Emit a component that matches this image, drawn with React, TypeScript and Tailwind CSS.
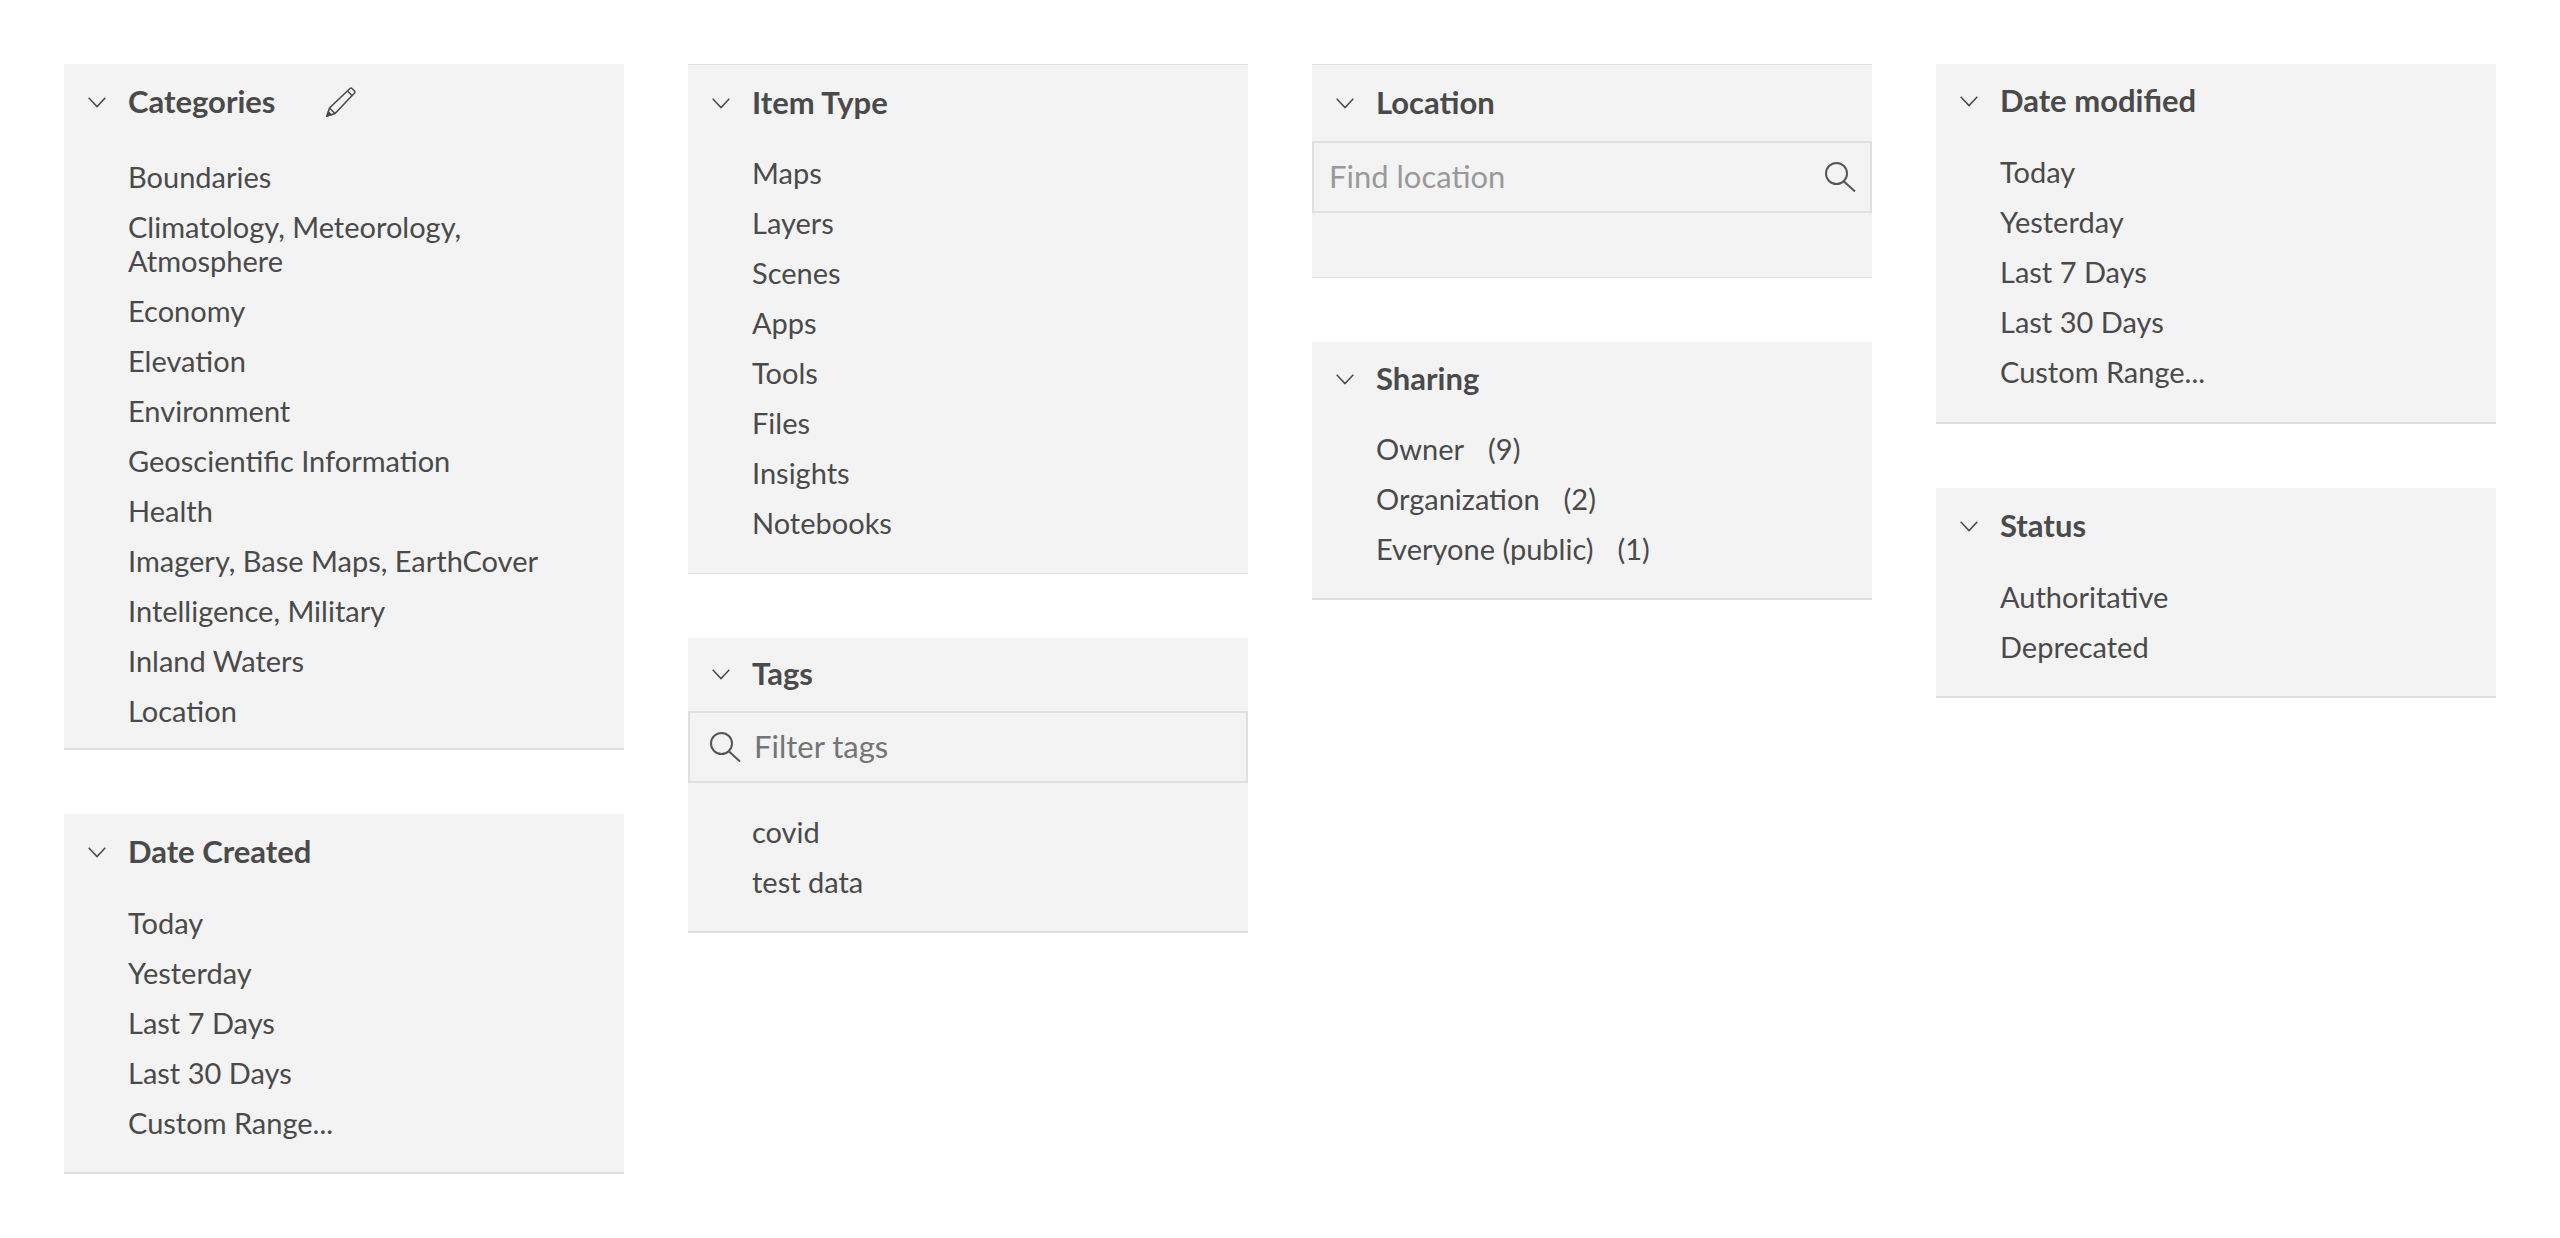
const dateRanges = ["Today", "Yesterday", "Last 7 Days", "Last 30 Days", "Custom Range..."]

function Chevron() {
  return (
    <svg width="18" height="11" viewBox="0 0 18 11" fill="none" stroke="#4a4a4a" strokeWidth="1.5" className="shrink-0">
      <path d="M0.7 0.8L9 9.6l8.3-8.8" />
    </svg>
  )
}

function SearchIcon() {
  return (
    <svg width="31" height="30" viewBox="0 0 31 30" fill="none" stroke="#555555" strokeWidth="2" className="shrink-0">
      <circle cx="11.5" cy="11.5" r="10.5" />
      <path d="M19 19.5L30 29.5" />
    </svg>
  )
}

function PencilIcon() {
  return (
    <svg width="30" height="30" viewBox="0 0 30 30" fill="none" stroke="#4a4a4a" strokeWidth="1.5" className="ml-[50px] shrink-0">
      <path d="M1 29l2.5-8L24 1.5q1-1 2 0L28.5 4q1 1 0 2L9 26.5z" />
      <path d="M3.5 21L9 26.5M21.5 4l5 5" />
      <path d="M1 29l1.3-4.2 2.9 2.9z" fill="#4a4a4a" />
    </svg>
  )
}

function Header({ title, children, height = "h-[76px]" }: { title: string; children?: React.ReactNode; height?: string }) {
  return (
    <div className={`flex items-center pl-[24px] ${height}`}>
      <Chevron />
      <h3 className="mb-[2px] ml-[22px] text-[31px] font-bold text-[#4a4a4a]">{title}</h3>
      {children}
    </div>
  )
}

function Item({ label, count }: { label: string; count?: number }) {
  return (
    <li className="flex min-h-[50px] items-center py-[8px] pl-[64px] pr-[64px] text-[29px] leading-[34px] text-[#4a4a4a]">
      <span>{label}</span>
      {count !== undefined && <span className="ml-[24px]">({count})</span>}
    </li>
  )
}

function Panel({ className = "", children }: { className?: string; children: React.ReactNode }) {
  return <section className={`border-[#e0e0e0] bg-[#f3f3f3] ${className}`}>{children}</section>
}

export default function App() {
  return (
    <div className="grid min-h-[1238px] grid-cols-4 items-start gap-[64px] bg-white p-[64px] font-['Lato',sans-serif]">
      <div className="flex flex-col gap-[64px]">
        <Panel className="border-b-2 pb-[12px]">
          <Header title="Categories">
            <PencilIcon />
          </Header>
          <ul className="pt-[12px]">
            {[
              "Boundaries",
              "Climatology, Meteorology, Atmosphere",
              "Economy",
              "Elevation",
              "Environment",
              "Geoscientific Information",
              "Health",
              "Imagery, Base Maps, EarthCover",
              "Intelligence, Military",
              "Inland Waters",
              "Location",
            ].map((c) => (
              <Item key={c} label={c} />
            ))}
          </ul>
        </Panel>
        <Panel className="border-b-2 pb-[24px]">
          <Header title="Date Created" />
          <ul className="pt-[8px]">
            {dateRanges.map((d) => (
              <Item key={d} label={d} />
            ))}
          </ul>
        </Panel>
      </div>

      <div className="flex flex-col gap-[64px]">
        <Panel className="border-y pb-[25px]">
          <Header title="Item Type" />
          <ul className="pt-[7px]">
            {["Maps", "Layers", "Scenes", "Apps", "Tools", "Files", "Insights", "Notebooks"].map((t) => (
              <Item key={t} label={t} />
            ))}
          </ul>
        </Panel>
        <Panel className="border-b-2 pb-[24px]">
          <Header title="Tags" height="h-[73px]" />
          <div className="flex h-[72px] items-center gap-[13px] border-2 border-[#e0e0e0] pl-[20px]">
            <SearchIcon />
            <span className="mb-[2px] text-[31px] text-[#757575]">Filter tags</span>
          </div>
          <ul className="pt-[24px]">
            {["covid", "test data"].map((t) => (
              <Item key={t} label={t} />
            ))}
          </ul>
        </Panel>
      </div>

      <div className="flex flex-col gap-[64px]">
        <Panel className="border-y">
          <Header title="Location" />
          <div className="flex h-[72px] items-center justify-between border-2 border-[#e0e0e0] pl-[15px] pr-[14px]">
            <span className="mb-[2px] text-[31px] text-[#999999]">Find location</span>
            <SearchIcon />
          </div>
          <div className="h-[64px]" />
        </Panel>
        <Panel className="border-b-2 pb-[24px]">
          <Header title="Sharing" height="h-[74px]" />
          <ul className="pt-[8px]">
            <Item label="Owner" count={9} />
            <Item label="Organization" count={2} />
            <Item label="Everyone (public)" count={1} />
          </ul>
        </Panel>
      </div>

      <div className="flex flex-col gap-[64px]">
        <Panel className="border-b-2 pb-[25px]">
          <Header title="Date modified" height="h-[75px]" />
          <ul className="pt-[8px]">
            {dateRanges.map((d) => (
              <Item key={d} label={d} />
            ))}
          </ul>
        </Panel>
        <Panel className="border-b-2 pb-[24px]">
          <Header title="Status" />
          <ul className="pt-[8px]">
            <Item label="Authoritative" />
            <Item label="Deprecated" />
          </ul>
        </Panel>
      </div>
    </div>
  )
}
